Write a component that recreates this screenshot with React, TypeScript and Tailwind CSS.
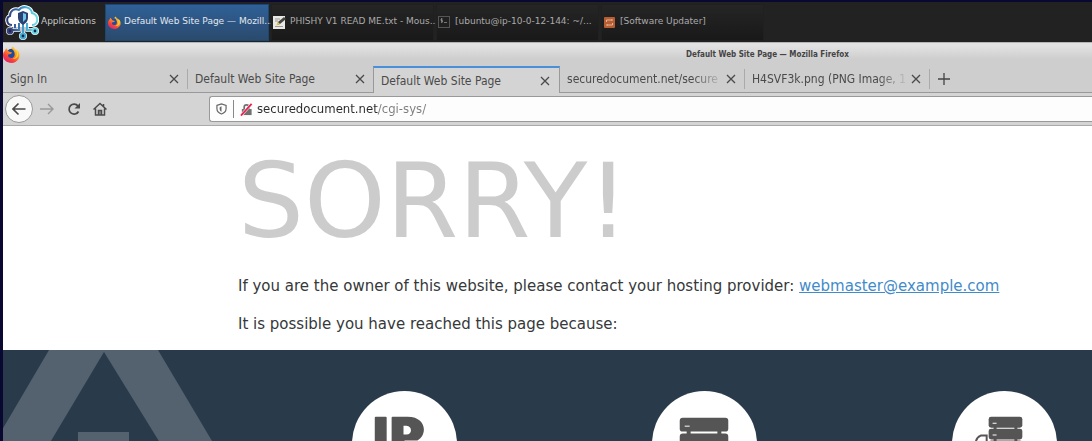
import React from "react";

function Firefox({ className }: { className: string }) {
  return (
    <svg viewBox="0 0 32 32" className={className} aria-hidden="true">
      <defs>
        <linearGradient id="fx" x1="0.9" y1="0" x2="0.2" y2="1">
          <stop offset="0" stopColor="#ffe23a" />
          <stop offset="0.4" stopColor="#ff9a1f" />
          <stop offset="0.7" stopColor="#f8433b" />
          <stop offset="1" stopColor="#d81f7a" />
        </linearGradient>
      </defs>
      <path d="M3 10 6 4l3 4 4-1 6-6c1 4 5 6 7 9l2-1c3 4 4 9 2 14-3 6-8 9-14 9C7 32 0 26 0 18c0-4 1-6 3-8Z" fill="url(#fx)" />
      <path d="M9 9c3-5 9-4 11 0 3 5 3 11-2 13-6 2-10-3-8-6l5-1 2-3-5-1Z" fill="#204c9d" />
      <path d="M19 1c2 5 8 7 7 15-1 5-4 7-8 8 8 2 14-7 9-15-3-3-7-4-8-8Z" fill="#ffd42d" />
    </svg>
  );
}

function CloudLogo() {
  return (
    <svg viewBox="0 0 34 35" className="h-[35px] w-[34px] shrink-0" fill="none" aria-hidden="true">
      <defs>
        <linearGradient id="cloud" gradientUnits="userSpaceOnUse" x1="0" y1="0" x2="34" y2="0">
          <stop offset="0" stopColor="#2c3468" />
          <stop offset="0.35" stopColor="#3a69a8" />
          <stop offset="0.65" stopColor="#45b4da" />
          <stop offset="1" stopColor="#7be3e8" />
        </linearGradient>
      </defs>
      <path d="M7 20C1 20 1 12 5 11c0-6 5-8 9-6 4-5 12-3 13 3 7 2 7 12 0 12Z" fill="#fff" stroke="#fff" strokeWidth="4" />
      <path d="M14 19v6H5M18 20v10M22 19v6h8M10 20v3" stroke="#fff" strokeWidth="3.500" />
      <g fill="#fff" stroke="#fff" strokeWidth="3">
        <circle cx="5" cy="26" r="2.500" /><circle cx="18" cy="31" r="2.500" /><circle cx="30" cy="26" r="2.500" />
      </g>
      <path d="M7 20C1 20 1 12 5 11c0-6 5-8 9-6 4-5 12-3 13 3 7 2 7 12 0 12" stroke="url(#cloud)" strokeWidth="2" />
      <path d="M14 18v7H5M22 18v7h8M10 19v4" stroke="url(#cloud)" strokeWidth="2" />
      <path d="M17 19h2v11h-2Z" fill="#3f9bcb" />
      <path d="m18 6 5 2v5c0 3-2 5-5 7-3-2-5-4-5-7V8Z" fill="#2b4272" />
      <path d="m18 8 3 1v5l-3 3Z" fill="#6cc8e6" />
      <g fill="#20264c" strokeWidth="2">
        <circle cx="5" cy="26" r="2.400" stroke="#38447c" /><circle cx="18" cy="31" r="2.400" stroke="#45b0d6" /><circle cx="30" cy="26" r="2.400" stroke="#6fdae4" />
      </g>
    </svg>
  );
}

function EditorIcon() {
  return (
    <svg viewBox="0 0 13 13" className="size-[13px] shrink-0" aria-hidden="true">
      <path d="M0 0h12v13H0Z" fill="#e8e8e5" />
      <path d="M2 3h5M2 5h3M2 10.500h8" stroke="#999" />
      <path d="m4 9 1-3 6-5 2 2-6 5Z" fill="#444" />
      <path d="m3 9.500 2-3.500 2 2Z" fill="#e5ca45" />
    </svg>
  );
}

function TerminalIcon() {
  return (
    <svg viewBox="0 0 13 13" className="size-[13px] shrink-0" fill="none" aria-hidden="true">
      <rect x="0.500" y="0.500" width="11" height="11" fill="#202020" stroke="#555" />
      <path d="M4.500 3H3v1.500h1.500V6H3M3.700 2v5M6 6.500h3" stroke="#999" strokeWidth="0.700" />
    </svg>
  );
}

function UpdaterIcon() {
  return (
    <svg viewBox="0 0 13 13" className="size-[13px] shrink-0" fill="none" aria-hidden="true">
      <rect x="1" y="1" width="11" height="11" rx="1" fill="#b65d32" />
      <path d="M3.500 6V4H9V3m0 2V4M9.500 7v2H4v1m0-2v1" stroke="#e3b49c" />
    </svg>
  );
}

const tasks = [
  { text: "PHISHY V1 READ ME.txt - Mous...", icon: <EditorIcon /> },
  { text: "[ubuntu@ip-10-0-12-144: ~/...", icon: <TerminalIcon /> },
  { text: "[Software Updater]", icon: <UpdaterIcon /> },
];

function Taskbar() {
  return (
    <header className="flex h-[40px] shrink-0 items-center bg-[#222] text-[9px] text-[#c8c8c8]">
      <button className="flex h-full w-[102px] shrink-0 items-center gap-[2px] pl-[2px]">
        <CloudLogo />
        <span>Applications</span>
      </button>
      <button className="flex h-[37px] w-[164px] shrink-0 items-center gap-[3px] border border-[#1c4773] bg-linear-to-b from-[#2f6098] to-[#2a4a6d] pl-[2px] whitespace-nowrap text-[#e3e7ec]">
        <Firefox className="size-[13px] shrink-0" />
        <span>Default Web Site Page — Mozill...</span>
      </button>
      {tasks.map((t) => (
        <button key={t.text} className="ml-[2px] flex h-[37px] w-[163px] shrink-0 items-center gap-1 border border-[#202020] bg-linear-to-b from-[#252525] to-[#191919] pl-px whitespace-nowrap text-[#aaa]">
          {t.icon}
          <span>{t.text}</span>
        </button>
      ))}
    </header>
  );
}

function Cross() {
  return (
    <svg viewBox="0 0 10 10" className="size-[10px]" fill="none" stroke="#4a4a4a" strokeWidth="1.300" aria-hidden="true">
      <path d="m1 1 8 8M9 1 1 9" />
    </svg>
  );
}

const tabs = [
  { title: "Sign In" },
  { title: "Default Web Site Page" },
  { title: "Default Web Site Page", active: true },
  { title: "securedocument.net/secure", fade: true },
  { title: "H4SVF3k.png (PNG Image, 1", fade: true },
];

function TabStrip() {
  return (
    <div className="flex h-[27px] shrink-0 bg-[#cecece] font-['DejaVu_Sans_Condensed','DejaVu_Sans',sans-serif] text-[12px] text-[#4a4a4a]" role="tablist">
      {tabs.map((t, i) => (
        <div
          key={i}
          className={
            t.active
              ? "flex w-[187px] shrink-0 items-center border-x border-t-2 border-x-[#999] border-t-[#4a90d9] bg-[#d4d4d4] pr-[9px] pl-[7px]"
              : "flex w-[185px] shrink-0 items-center border-b border-[#999] pr-[8px] pl-[7px]"
          }
        >
          <button
            role="tab"
            aria-selected={!!t.active}
            className={
              t.fade
                ? "min-w-0 flex-1 text-left whitespace-nowrap mask-r-from-80% mask-r-to-100%"
                : "min-w-0 flex-1 text-left whitespace-nowrap"
            }
          >
            {t.title}
          </button>
          <button aria-label="Close tab" className="ml-[2px]"><Cross /></button>
          {(i === 0 || i === 3 || i === 4) && <span className="ml-[8px] -mr-[8px] h-5 w-px bg-[#aaa]" />}
        </div>
      ))}
      <div className="flex flex-1 items-center border-b border-[#999] pl-[8px]">
        <button aria-label="New tab">
          <svg viewBox="0 0 12 12" className="size-3" stroke="#444" strokeWidth="1.300" aria-hidden="true"><path d="M6 0v12M0 6h12" /></svg>
        </button>
      </div>
    </div>
  );
}

function Toolbar() {
  return (
    <div className="flex h-[33px] shrink-0 items-center border-b border-[#aaa] bg-[#d4d4d4] pl-[2px]">
      <button aria-label="Back" className="flex size-[28px] items-center justify-center rounded-full border border-[#999] bg-[#f9f9f9]">
        <svg viewBox="0 0 14 14" className="size-[14px]" fill="none" stroke="#4a4a4a" strokeWidth="1.600" aria-hidden="true"><path d="M13.500 7H1M6.500 1.500 1 7l5.500 5.500" /></svg>
      </button>
      <button aria-label="Forward" className="ml-[7px]">
        <svg viewBox="0 0 14 14" className="size-[14px]" fill="none" stroke="#999" strokeWidth="1.400" aria-hidden="true"><path d="M0 7h13M8 2l5 5-5 5" /></svg>
      </button>
      <button aria-label="Reload" className="ml-[13px]">
        <svg viewBox="0 0 14 14" className="size-[14px]" fill="none" stroke="#4a4a4a" strokeWidth="1.700" aria-hidden="true"><path d="M11.500 9.500A5 5 0 1 1 11 4" /><path d="M13 1v5.500H7.500Z" fill="#4a4a4a" stroke="none" /></svg>
      </button>
      <button aria-label="Home" className="ml-[12px]">
        <svg viewBox="0 0 14 14" className="size-[14px]" fill="none" stroke="#4a4a4a" strokeWidth="1.500" aria-hidden="true"><path d="m.5 7.500 6.500-6 6.500 6M2.500 6.500V13h9V6.500M10.500 2v3" /><path d="M5.500 13V8.500h3V13" /><path d="M6.500 9h1v4h-1Z" fill="#4a4a4a" stroke="none" /></svg>
      </button>
      <div className="ml-[102px] flex h-[26px] flex-1 items-center rounded-l-[3px] border border-r-0 border-[#999] bg-[#fdfdfd] pl-[6px]">
        <svg viewBox="0 0 12 13" className="h-[12px] w-[11px]" fill="none" stroke="#666" strokeWidth="1.300" aria-hidden="true"><path d="M1 2.500 6 1l5 1.500V6c0 3-2 5-5 6-3-1-5-3-5-6Z" /><path d="M6 3.500v6C4.500 9 4 8 4 6V4.500Z" fill="#666" stroke="none" /></svg>
        <span className="mx-[6px] h-[18px] w-px bg-[#888]" />
        <svg viewBox="0 0 14 14" className="size-[13px]" fill="none" aria-hidden="true"><path d="M4.500 7V4.500a2.500 2.500 0 0 1 5 0V7" stroke="#707070" strokeWidth="1.800" /><path d="M2 6.500h10.500V13H2Z" fill="#707070" /><path d="M1 13.500 12.500 1" stroke="#fff" strokeWidth="3" /><path d="M1 13.500 12.500 1" stroke="#e8224e" strokeWidth="2" /></svg>
        <input
          type="text"
          aria-label="Address"
          defaultValue="securedocument.net/cgi-sys/"
          className="ml-1 min-w-0 flex-1 bg-linear-to-r from-[#2a2a2a] from-[121px] to-[#7c7c7c] to-[121px] bg-clip-text p-0 font-['DejaVu_Sans_Condensed','DejaVu_Sans',sans-serif] text-[13px] text-transparent caret-black outline-none"
        />
      </div>
    </div>
  );
}

function AddressIcon() {
  return (
    <svg viewBox="0 0 106 106" className="size-[105px]" fill="#555" aria-hidden="true">
      <path d="M24 26h10q1 0 1 1v50H23V27q0-1 1-1Z" />
      <path fillRule="evenodd" d="M41 26h15c20 0 20 19 10 24h-13v27H40V27q0-1 1-1Zm11 9v9h3c6 0 6-9 0-9Z" />
    </svg>
  );
}

function ServerIcon() {
  return (
    <svg viewBox="0 0 106 106" className="size-[105px]" fill="#555" aria-hidden="true">
      <rect x="28" y="27" width="49" height="14" rx="3" />
      <rect x="28" y="43" width="49" height="14" rx="3" />
      <path d="M35 40h4v4h-4ZM66 40h4v4h-4Z" />
      <path d="M33 35h5v1h-5Z" fill="#fff" />
    </svg>
  );
}

function MovedServerIcon() {
  return (
    <svg viewBox="0 0 106 106" className="size-[105px]" fill="#555" aria-hidden="true">
      <rect x="37" y="26" width="34" height="11" rx="2.500" />
      <rect x="37" y="38" width="34" height="11" rx="2.500" />
      <rect x="37" y="50" width="34" height="10" rx="2.500" />
      <path d="M42 36h3v3h-3ZM63 36h3v3h-3ZM42 48h3v3h-3ZM63 48h3v3h-3Z" />
      <path d="M41 32h4v1h-4ZM41 44h4v1h-4Z" fill="#fff" />
      <path d="M35 45h-6q-5 2-5 8v7h11Z" fill="none" stroke="#555" strokeWidth="2" />
    </svg>
  );
}

export default function App() {
  return (
    <div className="flex h-screen flex-col overflow-hidden border-t-2 border-l-3 border-[#080830] bg-white font-['DejaVu_Sans',sans-serif]">
      <Taskbar />
      <div className="grid h-[24px] shrink-0 grid-cols-[20px_1fr] items-center border-t border-[#b5b5b5] bg-linear-to-b from-[#e3e3e3] from-10% to-[#cecece] to-70%">
        <Firefox className="size-[17px]" />
        <h1 className="pl-[420px] text-center font-['DejaVu_Sans_Condensed','DejaVu_Sans',sans-serif] text-[8px] font-bold text-[#444]">Default Web Site Page — Mozilla Firefox</h1>
      </div>
      <TabStrip />
      <Toolbar />
      <main className="flex min-h-0 flex-1 flex-col text-[15px] text-[#36383a]">
        <div className="flex h-[224px] shrink-0 flex-col pl-[235px] whitespace-nowrap">
          <h2 className="mt-[14px] text-[104px] leading-[122px] text-[#ccc]">SORRY!</h2>
          <p className="mt-[14px] leading-5">
            If you are the owner of this website, please contact your hosting provider:{" "}
            <a href="mailto:webmaster@example.com" className="text-[#428bca] underline">webmaster@example.com</a>
          </p>
          <p className="mt-[18px] leading-5">It is possible you have reached this page because:</p>
        </div>
        <section className="relative min-h-0 flex-1 overflow-hidden bg-[#293a4a]">
          <svg viewBox="0 0 220 101" className="absolute top-0 left-0 h-[101px] w-[220px]" fill="#54616e" aria-hidden="true">
            <path d="M46 0h109l60 101h-53L101 2 42 101h-53v-4Z" />
            <rect x="75" y="82" width="51" height="19" />
          </svg>
          <div className="relative flex justify-start gap-[195px] pt-[41px] pl-[349px]">
            {[AddressIcon, ServerIcon, MovedServerIcon].map((Icon, i) => (
              <div key={i} className="size-[105px] shrink-0 rounded-full bg-white"><Icon /></div>
            ))}
          </div>
        </section>
      </main>
    </div>
  );
}
